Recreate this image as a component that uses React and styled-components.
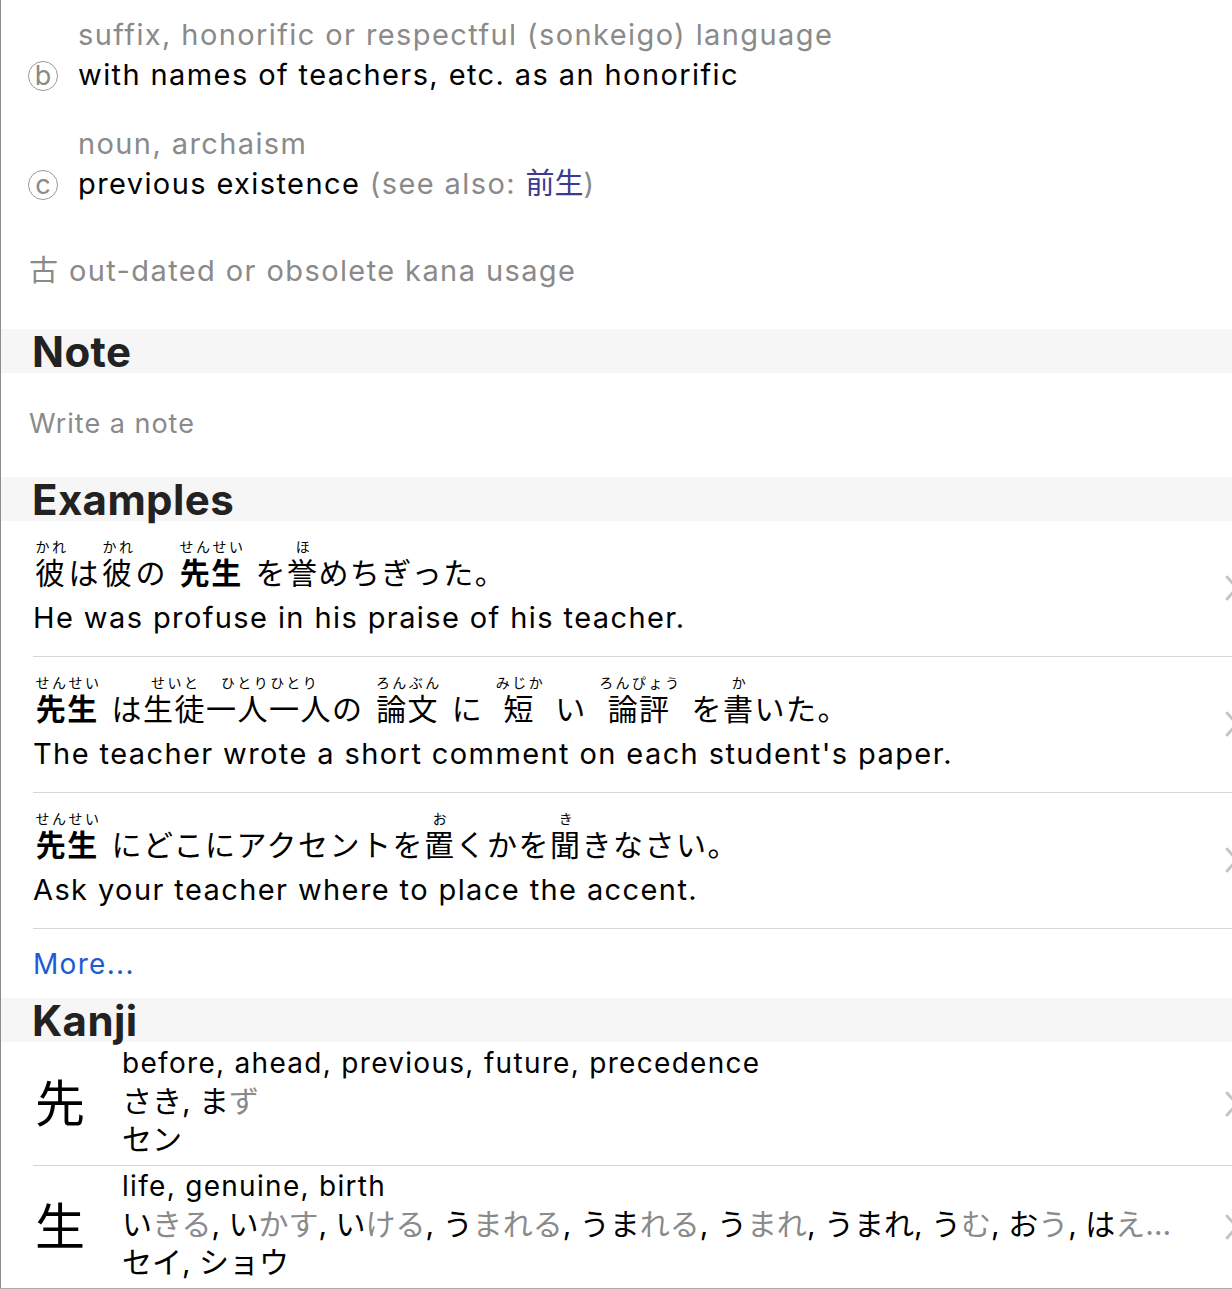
import React from 'react';
import styled, { createGlobalStyle, css } from 'styled-components';

const gray = '#8a8a8a';
const fontStack = 'Inter, "Noto Sans CJK JP", sans-serif';

const GlobalStyle = createGlobalStyle`
  html, body {
    margin: 0;
    padding: 0;
    background: #fff;
    overflow: hidden;
  }

  body {
    font-family: ${fontStack};
    color: #000;
  }
`;

// body copy: the reference uses a loosely tracked system font
const bodyText = css`
  font-size: 29px;
  letter-spacing: 1.4px;
`;

const smallText = css`
  font-size: 28px;
  letter-spacing: 1.3px;
`;

const senses = [
  {
    letter: 'b',
    pos: 'suffix, honorific or respectful (sonkeigo) language',
    gloss: 'with names of teachers, etc. as an honorific',
  },
  {
    letter: 'c',
    pos: 'noun, archaism',
    gloss: 'previous existence',
    seeAlso: '前生',
  },
];

const examples = [
  {
    jp: [['彼', 'かれ'], 'は', ['彼', 'かれ'], 'の ', ['先生', 'せんせい', true], ' を', ['誉', 'ほ'], 'めちぎった。'],
    en: 'He was profuse in his praise of his teacher.',
  },
  {
    jp: [
      ['先生', 'せんせい', true], ' は', ['生徒', 'せいと'], ['一人一人', 'ひとりひとり'], 'の ',
      ['論文', 'ろんぶん'], ' に ', ['短', 'みじか'], ' い ', ['論評', 'ろんぴょう'], ' を', ['書', 'か'], 'いた。',
    ],
    en: "The teacher wrote a short comment on each student's paper.",
  },
  {
    jp: [['先生', 'せんせい', true], ' にどこにアクセントを', ['置', 'お'], 'くかを', ['聞', 'き'], 'きなさい。'],
    en: 'Ask your teacher where to place the accent.',
  },
];

const kanji = [
  {
    char: '先',
    meaning: 'before, ahead, previous, future, precedence',
    kun: [['さき', ''], ['ま', 'ず']],
    on: 'セン',
  },
  {
    char: '生',
    meaning: 'life, genuine, birth',
    kun: [
      ['い', 'きる'], ['い', 'かす'], ['い', 'ける'], ['う', 'まれる'], ['うま', 'れる'],
      ['う', 'まれ'], ['うまれ', ''], ['う', 'む'], ['お', 'う'], ['は', 'え…'],
    ],
    on: 'セイ, ショウ',
  },
];

const Chevron = () => (
  <ChevronCell>
    <svg width="14" height="26" viewBox="0 0 14 26" fill="none">
      <path d="M2 2 L12 13 L2 24" stroke="#c5c5c9" strokeWidth="3" strokeLinecap="round" strokeLinejoin="round" />
    </svg>
  </ChevronCell>
);

const JapaneseLine = ({ parts }) => (
  <JpLine>
    {parts.map((part, i) => {
      if (typeof part === 'string') return <Plain key={i}>{part}</Plain>;
      const [base, reading, bold] = part;
      return (
        <Furigana key={i}>
          <Reading>{reading}</Reading>
          <Base $bold={bold}>{base}</Base>
        </Furigana>
      );
    })}
  </JpLine>
);

const App = () => (
  <Page>
    <GlobalStyle />

    {senses.map((s) => (
      <Sense key={s.letter}>
        <Pos>{s.pos}</Pos>
        <Marker>{s.letter}</Marker>
        <Gloss>
          {s.gloss}
          {s.seeAlso && (
            <Muted>
              {' (see also: '}
              <SeeAlso>{s.seeAlso}</SeeAlso>)
            </Muted>
          )}
        </Gloss>
      </Sense>
    ))}

    <UsageNote>古 out-dated or obsolete kana usage</UsageNote>

    <SectionHeader>Note</SectionHeader>
    <NotePlaceholder>Write a note</NotePlaceholder>

    <SectionHeader>Examples</SectionHeader>
    {examples.map((ex, i) => (
      <ExampleRow key={i}>
        <ExampleText>
          <JapaneseLine parts={ex.jp} />
          <EnLine>{ex.en}</EnLine>
        </ExampleText>
        <Chevron />
      </ExampleRow>
    ))}
    <MoreLink>More...</MoreLink>

    <SectionHeader>Kanji</SectionHeader>
    {kanji.map((k) => (
      <KanjiRow key={k.char}>
        <KanjiChar>{k.char}</KanjiChar>
        <KanjiInfo>
          <InfoLine>{k.meaning}</InfoLine>
          <KanaLine>
            {k.kun.map(([stem, okurigana], i) => (
              <React.Fragment key={i}>
                {i > 0 && ', '}
                {stem}
                {okurigana && <Okurigana>{okurigana}</Okurigana>}
              </React.Fragment>
            ))}
          </KanaLine>
          <KanaLine>{k.on}</KanaLine>
        </KanjiInfo>
        <Chevron />
      </KanjiRow>
    ))}
  </Page>
);

const Page = styled.div`
  box-sizing: border-box;
  width: calc(100% + 19px);
  padding-top: 15px;
  border-left: 1px solid #8c8c8c;
  border-bottom: 1px solid #acacac;
`;

const Sense = styled.div`
  ${bodyText};
  display: grid;
  grid-template-columns: 50px 1fr;
  padding-left: 27px;
  line-height: 40px;
  margin-bottom: 29px;

  & + & {
    margin-bottom: 47px;
  }
`;

const Pos = styled.div`
  grid-column: 2;
  color: ${gray};
`;

const Marker = styled.div`
  grid-column: 1;
  align-self: center;
  box-sizing: border-box;
  width: 30px;
  height: 30px;
  margin-top: 2px;
  border: 1px solid #9a9a9a;
  border-radius: 50%;
  color: ${gray};
  font-size: 27px;
  letter-spacing: 0;
  line-height: 27px;
  text-align: center;
`;

const Gloss = styled.div`
  grid-column: 2;
`;

const Muted = styled.span`
  color: ${gray};
`;

const SeeAlso = styled.span`
  color: #3d3a8e;
  letter-spacing: 0;
`;

const UsageNote = styled.div`
  ${bodyText};
  padding-left: 28px;
  line-height: 40px;
  color: ${gray};
  margin-bottom: 38px;
`;

const SectionHeader = styled.div`
  height: 44px;
  background: #f6f6f6;
  padding-left: 31px;
  font-size: 42px;
  font-weight: 700;
  letter-spacing: 0.4px;
  line-height: 46px;
  color: #222;
`;

const NotePlaceholder = styled.div`
  padding: 31px 0 33px 28px;
  font-size: 27px;
  letter-spacing: 1px;
  line-height: 40px;
  color: ${gray};
`;

const ExampleRow = styled.div`
  display: flex;
  align-items: center;
  margin-left: 32px;
  padding: 17px 0 18px;
  border-bottom: 1px solid #d6d6d6;
`;

const ExampleText = styled.div`
  flex: 1;
  min-width: 0;
`;

const JpLine = styled.div`
  display: flex;
  align-items: flex-end;
  font-size: 30px;
  letter-spacing: 1.5px;
  line-height: 34px;
  white-space: pre;
`;

const Plain = styled.span`
  white-space: pre;
`;

const Furigana = styled.span`
  display: inline-flex;
  flex-direction: column;
  align-items: center;
`;

const Reading = styled.span`
  padding-left: 2.5px;
  font-size: 14px;
  letter-spacing: 2.5px;
  line-height: 18px;
`;

const Base = styled.span`
  font-weight: ${(p) => (p.$bold ? 700 : 400)};
`;

const EnLine = styled.div`
  ${bodyText};
  margin-top: 8px;
  line-height: 40px;
  white-space: nowrap;
`;

const ChevronCell = styled.div`
  flex: none;
  display: flex;
  width: 14px;
  margin: 0 12px 0 auto;
`;

const MoreLink = styled.div`
  ${smallText};
  padding: 15px 0 14px 32px;
  line-height: 40px;
  color: #1e5ad6;
`;

const KanjiRow = styled.div`
  display: flex;
  align-items: center;
  margin-left: 32px;
  height: 123px;
  border-bottom: 1px solid #d6d6d6;

  &:last-child {
    border-bottom: none;
    height: 122px;
  }
`;

const KanjiChar = styled.div`
  flex: none;
  box-sizing: border-box;
  width: 89px;
  padding-left: 2px;
  font-size: 50px;
  line-height: 60px;
`;

const KanjiInfo = styled.div`
  flex: 1;
  min-width: 0;
  padding-bottom: 6px;
`;

const InfoLine = styled.div`
  ${smallText};
  line-height: 38px;
  white-space: nowrap;
  overflow: hidden;
`;

const KanaLine = styled.div`
  font-size: 30px;
  line-height: 38px;
  white-space: nowrap;
  overflow: hidden;
`;

const Okurigana = styled.span`
  color: ${gray};
`;

export default App;
